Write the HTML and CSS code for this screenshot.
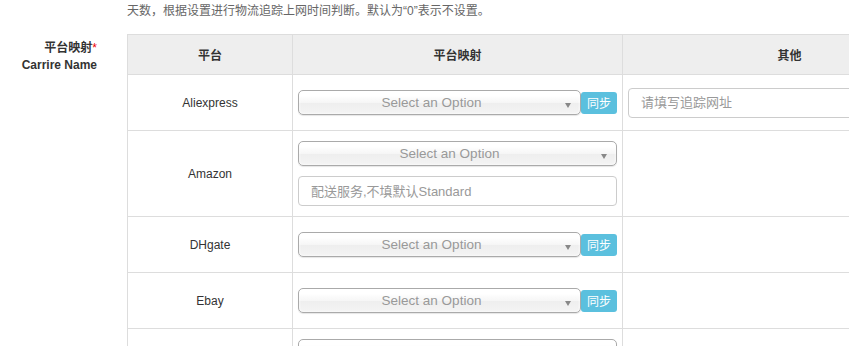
FILE: index.html
```html
<!DOCTYPE html>
<html lang="zh-CN">
<head>
<meta charset="utf-8">
<title>平台映射</title>
<link rel="stylesheet" href="styles.css">
</head>
<body>
<div class="page">
  <p class="hint">天数，根据设置进行物流追踪上网时间判断。默认为“0”表示不设置。</p>
  <div class="form-row">
    <div class="label"><span class="label-cn">平台映射<span class="req">*</span></span><span class="label-en">Carrire Name</span></div>
    <div class="table-wrap">
      <table class="map-table">
        <colgroup><col class="c1"><col class="c2"><col class="c3"></colgroup>
        <thead>
          <tr><th>平台</th><th>平台映射</th><th>其他</th></tr>
        </thead>
        <tbody>
          <tr class="row">
            <td class="name">Aliexpress</td>
            <td><div class="pick"><div class="chosen short"><span class="chosen-text">Select an Option</span><b class="arrow"></b></div><button class="sync">同步</button></div></td>
            <td><input class="field" type="text" placeholder="请填写追踪网址"></td>
          </tr>
          <tr class="row tall">
            <td class="name">Amazon</td>
            <td><div class="chosen"><span class="chosen-text">Select an Option</span><b class="arrow"></b></div><input class="field gap" type="text" placeholder="配送服务,不填默认Standard"></td>
            <td></td>
          </tr>
          <tr class="row">
            <td class="name">DHgate</td>
            <td><div class="pick"><div class="chosen short"><span class="chosen-text">Select an Option</span><b class="arrow"></b></div><button class="sync">同步</button></div></td>
            <td></td>
          </tr>
          <tr class="row">
            <td class="name">Ebay</td>
            <td><div class="pick"><div class="chosen short"><span class="chosen-text">Select an Option</span><b class="arrow"></b></div><button class="sync">同步</button></div></td>
            <td></td>
          </tr>
          <tr class="row tall">
            <td class="name"></td>
            <td><div class="chosen"><span class="chosen-text">Select an Option</span><b class="arrow"></b></div><input class="field gap" type="text" placeholder="配送服务,不填默认Standard"></td>
            <td></td>
          </tr>
        </tbody>
      </table>
    </div>
  </div>
</div>
</body>
</html>
```

FILE: styles.css
```css
html, body {
  margin: 0;
  padding: 0;
  background: #fff;
  overflow: hidden;
}
body {
  font-family: "Liberation Sans", Arial, "Noto Sans CJK SC", sans-serif;
  font-size: 12px;
  color: #333;
}
.page {
  width: 1000px;
}
.hint {
  margin: 3px 0 15px 127px;
  line-height: 16px;
  color: #666;
  font-size: 12px;
}
.form-row {
  display: flex;
  align-items: flex-start;
}
.label {
  width: 97px;
  margin-right: 30px;
  padding-top: 6px;
  display: flex;
  flex-direction: column;
  align-items: flex-end;
  font-weight: bold;
  line-height: 17px;
  color: #333;
}
.req {
  color: #e00;
  font-weight: normal;
}
.map-table {
  border-collapse: collapse;
  table-layout: fixed;
  width: 829px;
}
.c1 { width: 165px; }
.c2 { width: 330px; }
.c3 { width: 334px; }
.map-table th,
.map-table td {
  border: 1px solid #ddd;
  box-sizing: border-box;
}
.map-table th {
  background: #eee;
  height: 40px;
  font-weight: bold;
  text-align: center;
  color: #333;
  padding: 0;
}
.map-table td {
  padding: 10px 5px;
  vertical-align: middle;
  height: 56px;
}
.map-table tr.tall td {
  height: 86px;
}
.map-table td.name {
  text-align: center;
  color: #333;
}
.pick {
  display: flex;
  align-items: center;
}
.chosen {
  position: relative;
  box-sizing: border-box;
  height: 25px;
  border: 1px solid #aaa;
  border-radius: 5px;
  background: linear-gradient(#fff 20%, #f6f6f6 50%, #eee 52%, #f4f4f4 100%);
  box-shadow: inset 0 0 3px #fff, 0 1px 1px rgba(0, 0, 0, 0.1);
  padding: 0 20px 0 4px;
  text-align: center;
  line-height: 23px;
  font-size: 13.5px;
  color: #999;
}
.chosen.short {
  flex: 1;
}
.arrow {
  position: absolute;
  right: 9px;
  top: 12px;
  width: 0;
  height: 0;
  border-left: 3px solid transparent;
  border-right: 3px solid transparent;
  border-top: 5px solid #888;
}
.sync {
  width: 36px;
  height: 22px;
  border: 0;
  border-radius: 3px;
  background: #5bc0de;
  color: #fff;
  font-family: "Liberation Sans", Arial, "Noto Sans CJK SC", sans-serif;
  font-size: 12px;
  padding: 0;
  margin: 0;
}
.field {
  display: block;
  box-sizing: border-box;
  width: 100%;
  height: 30px;
  border: 1px solid #ccc;
  border-radius: 4px;
  padding: 0 12px;
  font-family: "Liberation Sans", Arial, "Noto Sans CJK SC", sans-serif;
  font-size: 13px;
  color: #555;
  background: #fff;
  outline: none;
}
.field::placeholder {
  color: #999;
}
.field.gap {
  margin-top: 10px;
}
```
